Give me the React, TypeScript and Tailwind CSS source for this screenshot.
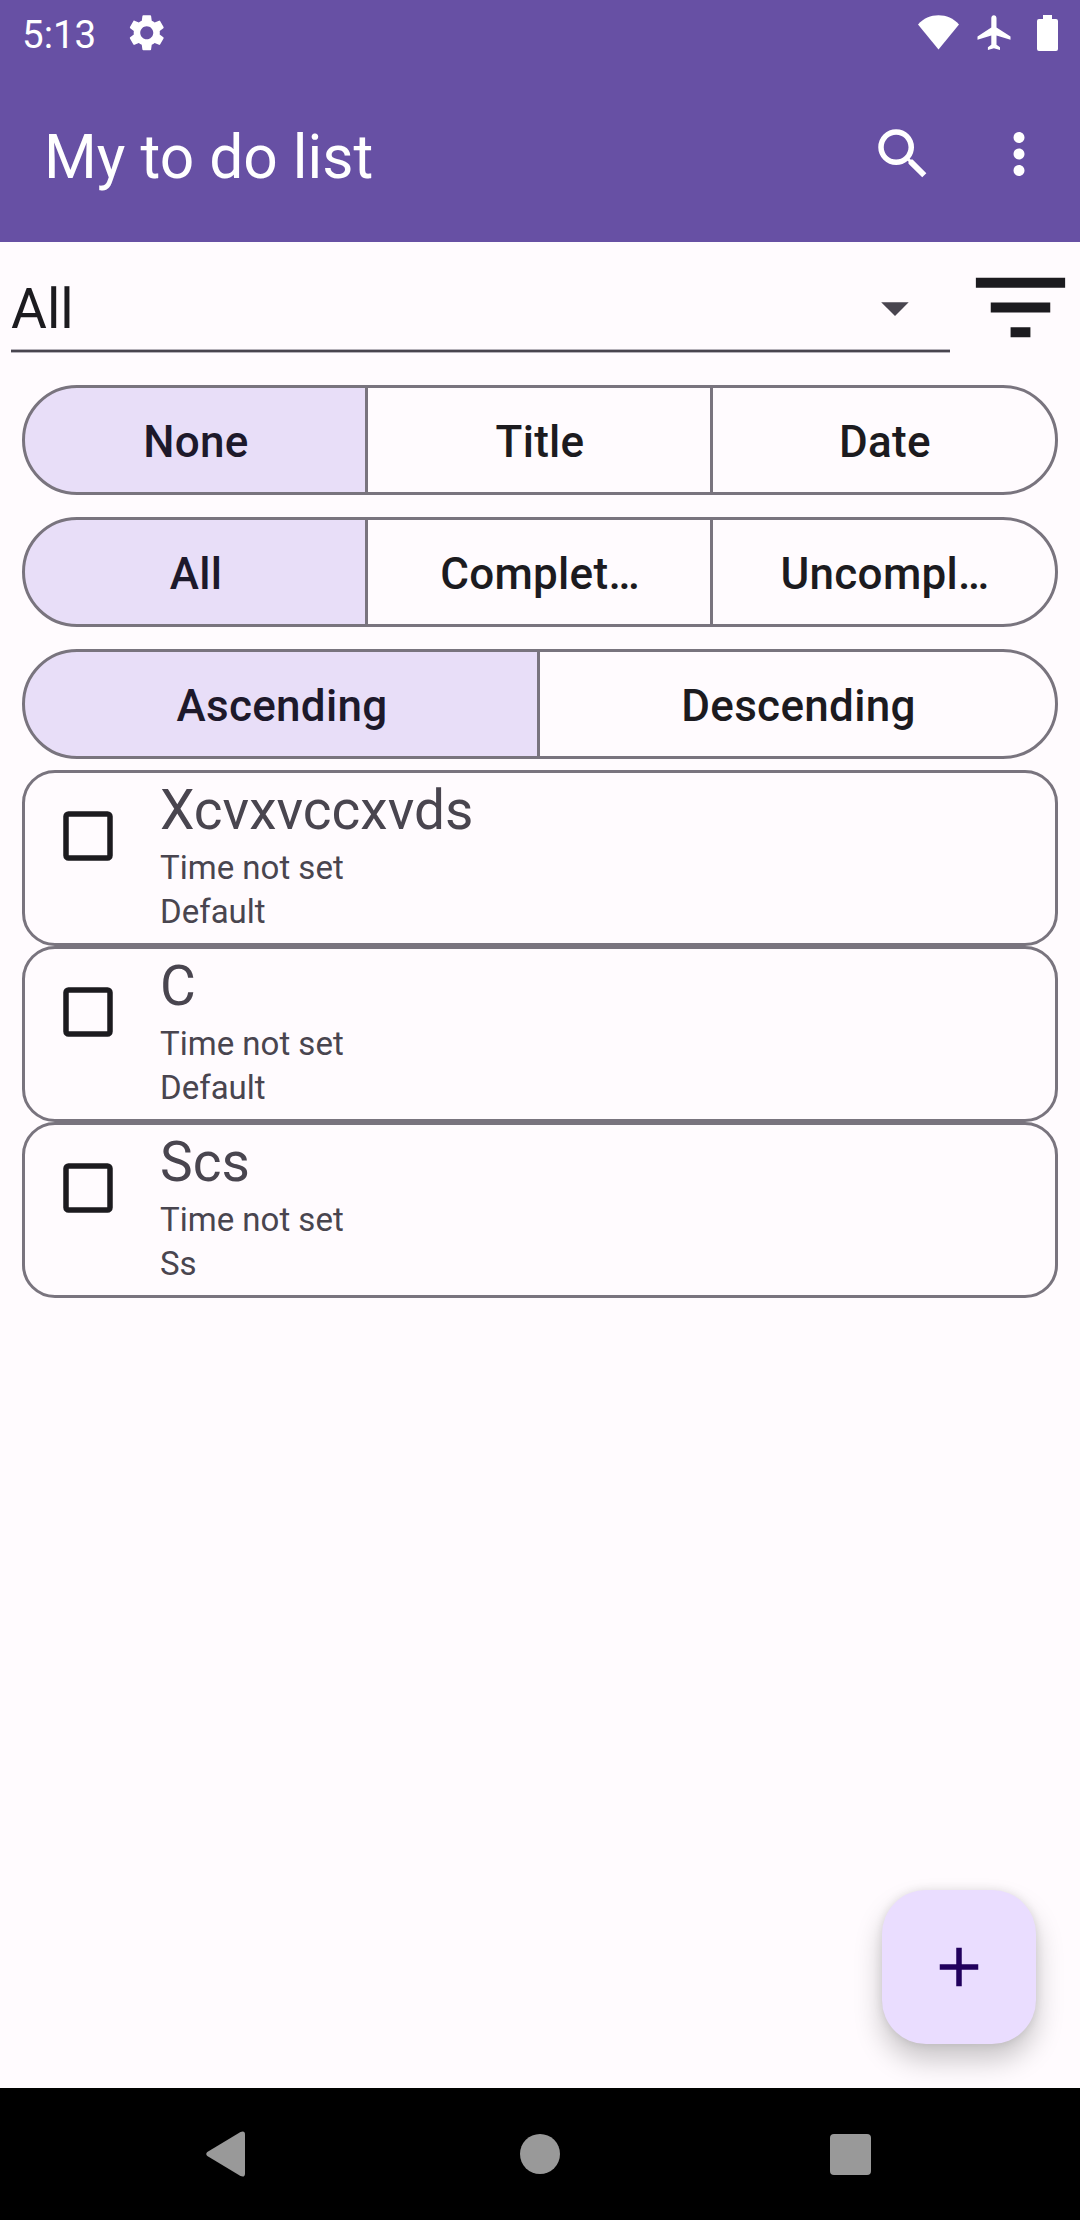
import { MdAdd, MdFilterList, MdMoreVert, MdSearch, MdSettings } from "react-icons/md";

type Segment = { label: string; width: string; selected?: boolean };

const segmentRows: Segment[][] = [
  [
    { label: "None", width: "w-[346px]", selected: true },
    { label: "Title", width: "w-[348px]" },
    { label: "Date", width: "w-[348px]" },
  ],
  [
    { label: "All", width: "w-[346px]", selected: true },
    { label: "Complet…", width: "w-[348px]" },
    { label: "Uncompl…", width: "w-[348px]" },
  ],
  [
    { label: "Ascending", width: "w-[518px]", selected: true },
    { label: "Descending", width: "w-[521px]" },
  ],
];

const tasks = [
  { title: "Xcvxvccxvds", time: "Time not set", category: "Default" },
  { title: "C", time: "Time not set", category: "Default" },
  { title: "Scs", time: "Time not set", category: "Ss" },
];

function StatusBar() {
  return (
    <div className="flex h-[66px] items-center justify-between pl-[22px] pr-[22px]">
      <div className="flex items-center">
        <span className="w-[103px] pt-[3px] text-[38.5px] leading-[66px]">5:13</span>
        <MdSettings className="size-[43.5px]" />
      </div>
      <div className="flex items-center">
        <svg className="h-[36px] w-[41px]" viewBox="0 0 41 36">
          <path fill="currentColor" d="M20.5 34.5L0 9.4C5.5 3.2 12.6.2 20.5.2S35.5 3.2 41 9.4Z" />
        </svg>
        <svg className="ml-[18px] h-[36px] w-[34px]" viewBox="0 0 34 36">
          <path
            fill="currentColor"
            d="M33.5 24.8v-3.2L19.5 12.500V3.200C19.500 1.400 18.400.2 16.900.2S14.300 1.400 14.300 3.200V12.500L.5 21.600V24.800L14.300 20.600V29.800L10.900 32.300V35L16.900 33.300L23 35V32.300L19.500 29.800V20.600Z"
          />
        </svg>
        <svg className="ml-[26px] h-[36px] w-[21px]" viewBox="0 0 21 36">
          <path
            fill="currentColor"
            d="M6 0h9v4h4a2 2 0 0 1 2 2v28a2 2 0 0 1-2 2H2a2 2 0 0 1-2-2V6a2 2 0 0 1 2-2h4Z"
          />
        </svg>
      </div>
    </div>
  );
}

function AppBar() {
  return (
    <div className="flex h-[176px] items-start pl-[44px] pr-[28px] pt-[55px]">
      <h1 className="mt-[2px] flex-1 text-[60.5px] leading-[70px] font-normal">My to do list</h1>
      <MdSearch className="size-[66px]" />
      <MdMoreVert className="ml-[50px] size-[66px]" />
    </div>
  );
}

function SpinnerRow() {
  return (
    <div className="flex h-[132px] pl-[11px]">
      <div className="flex h-[110px] w-[940px] flex-col">
        <div className="flex h-[108px] items-center justify-between pr-[41px]">
          <span className="pt-[26px] text-[55px] leading-[64px] text-[#1c1b1f]">All</span>
          <svg className="mt-[25px] h-[14px] w-[28px]" viewBox="0 0 28 14">
            <path fill="#49454f" d="M.2.200H27.700L14 14Z" />
          </svg>
        </div>
        <div className="h-[2px] shrink-0 bg-[#49454f] shadow-[0_-1px_0_#b5b1b9,0_1px_0_#b5b1b9]" />
      </div>
      <MdFilterList className="ml-[11px] mt-[6px] size-[119px] shrink-0 text-[#1c1b1f]" />
    </div>
  );
}

function SegmentedRow({ segments }: { segments: Segment[] }) {
  return (
    <div className="flex h-[110px]">
      {segments.map((s) => (
        <button
          key={s.label}
          className={`-ml-[3px] flex shrink-0 items-center justify-center border-[3px] border-[#79747e] pl-[2px] pt-[4px] text-[44px] leading-[52px] font-medium tracking-[0.3px] first:ml-0 first:rounded-l-[55px] last:rounded-r-[55px] ${s.width} ${
            s.selected ? "bg-[#e8def8] text-[#1d192b]" : "text-[#1c1b1f]"
          }`}
        >
          {s.label}
        </button>
      ))}
    </div>
  );
}

function TaskCard({ title, time, category }: (typeof tasks)[number]) {
  return (
    <div className="flex h-[176px] rounded-[33px] border-[3px] border-[#79747e] pl-[38px] text-[#49454f]">
      <svg className="mt-[38px] size-[50px] shrink-0" viewBox="0 0 50 50" role="checkbox" aria-checked="false">
        <rect x="3" y="3" width="44" height="44" rx="2.500" fill="none" stroke="#1c1b1f" strokeWidth="5.500" />
      </svg>
      <div className="ml-[47px] flex flex-col">
        <span className="mt-[4px] text-[55px] leading-[66px]">{title}</span>
        <span className="mt-[3px] text-[33px] leading-[44px]">{time}</span>
        <span className="text-[33px] leading-[44px]">{category}</span>
      </div>
    </div>
  );
}

function NavBar() {
  return (
    <nav className="flex h-[132px] items-center bg-black pl-[206px] text-[#999999]">
      <svg className="h-[46px] w-[39px]" viewBox="0 0 39 46">
        <path fill="currentColor" d="M1.300 21L34.500.9Q39-.8 39 3.500V42.500Q39 46.800 34.500 45.100L1.300 25Q-.8 23 1.300 21Z" />
      </svg>
      <div className="ml-[275px] size-[40px] rounded-full bg-[#999999]" />
      <div className="ml-[270px] size-[41px] rounded-[4px] bg-[#999999]" />
    </nav>
  );
}

export default function App() {
  return (
    <div className="relative flex h-[2220px] w-[1080px] flex-col overflow-hidden bg-[#fffbfe] font-['Roboto',sans-serif]">
      <header className="bg-[#6750a4] text-white">
        <StatusBar />
        <AppBar />
      </header>
      <main className="flex-1">
        <SpinnerRow />
        <div className="mx-[22px] mt-[11px] flex flex-col gap-[22px]">
          {segmentRows.map((row) => (
            <SegmentedRow key={row[0].label} segments={row} />
          ))}
        </div>
        <div className="mx-[22px] mt-[11px] flex flex-col">
          {tasks.map((t) => (
            <TaskCard key={t.title} {...t} />
          ))}
        </div>
      </main>
      <button
        aria-label="Add"
        className="absolute bottom-[176px] right-[44px] flex size-[154px] items-center justify-center rounded-[44px] bg-[#eaddff] text-[#21005d] shadow-[0_16px_28px_rgba(0,0,0,0.22),0_0_10px_rgba(0,0,0,0.1)]"
      >
        <MdAdd className="size-[66px]" />
      </button>
      <NavBar />
    </div>
  );
}
